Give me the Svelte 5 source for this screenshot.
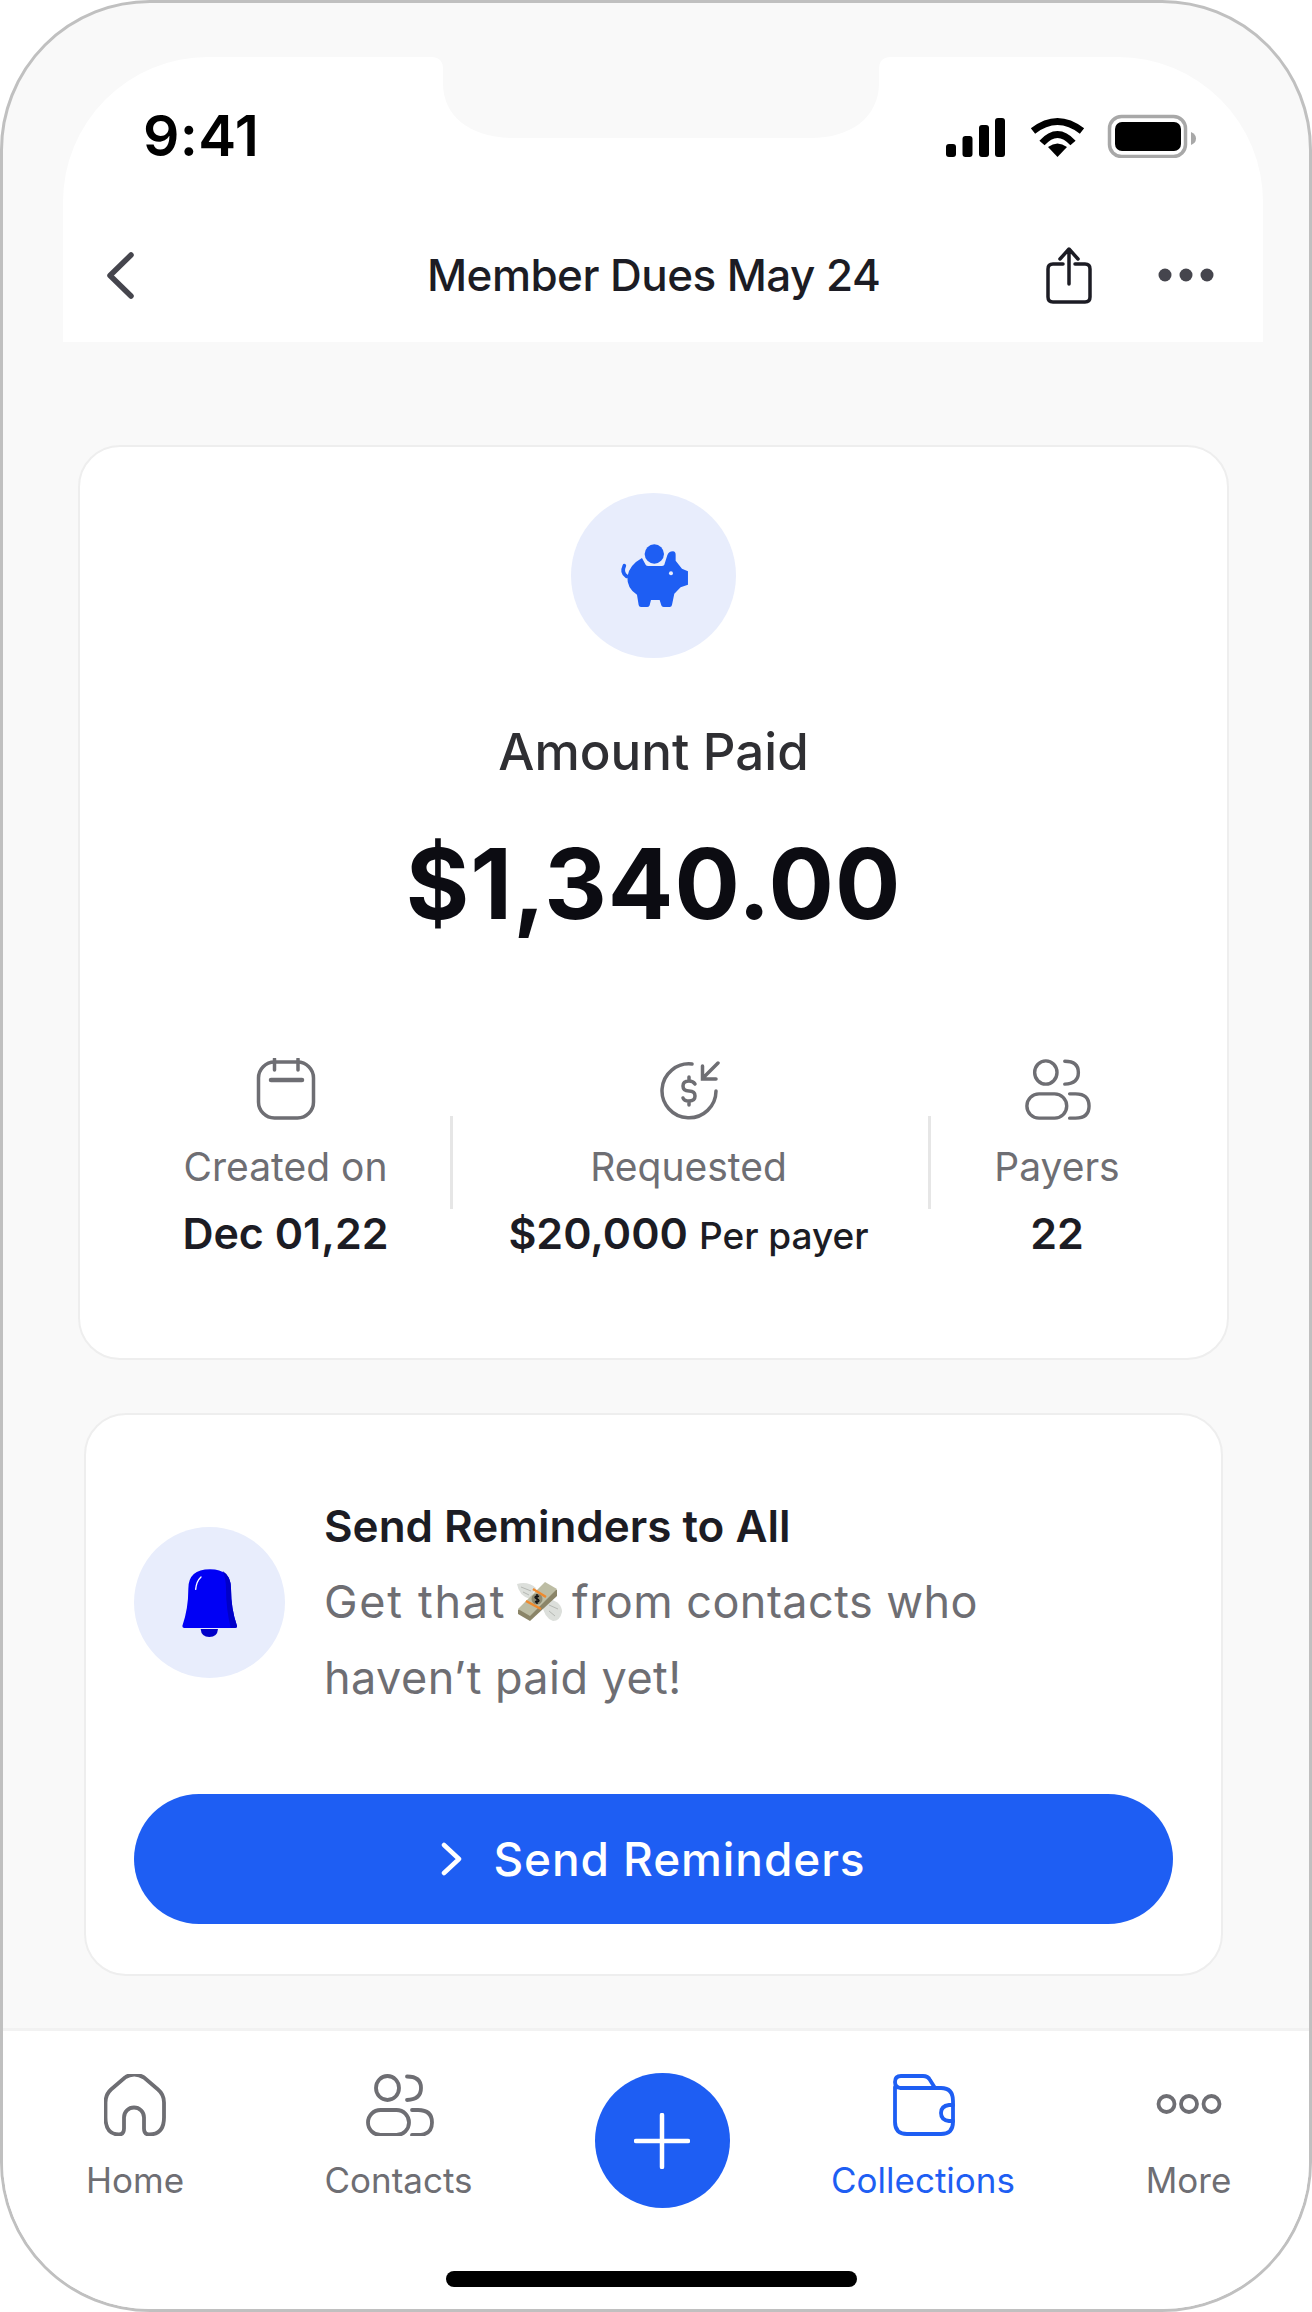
<script>
  const stats = [
    { label: 'Created on', value: 'Dec 01,22', note: '', kind: 'calendar' },
    { label: 'Requested', value: '$20,000', note: 'Per payer', kind: 'dollar' },
    { label: 'Payers', value: '22', note: '', kind: 'users' }
  ];
</script>

{#snippet users(cls)}
  <svg class={cls} viewBox="364 2074 70 62" aria-hidden="true">
    <ellipse cx="387.5" cy="2088" rx="11.5" ry="12" />
    <path d="M407 2076.5Q421 2076.5 421 2088T407 2100" />
    <rect x="368" y="2110" width="41" height="25" rx="12.5" />
    <path d="M412 2110H418Q432 2110 432 2122.5T418 2135H412" />
  </svg>
{/snippet}

<div class="phone">
  <header class="top">
    <svg class="notch" viewBox="431 57 460 82" aria-hidden="true">
      <path d="M431 57H891Q879 57 879 69V83C879 118 850 138 811 138H515C472 138 443 118 443 83V69Q443 57 431 57Z" />
    </svg>
    <div class="status">
      <span class="time">9:41</span>
      <svg class="status-icons" viewBox="946 112 251 44" aria-hidden="true">
        <rect x="946" y="142" width="10" height="13" rx="3" />
        <rect x="962.5" y="134" width="10" height="21" rx="3" />
        <rect x="979" y="123" width="10" height="32" rx="3" />
        <rect x="995" y="116" width="10" height="39" rx="3" />
        <path class="wifi" d="M1033 129Q1057.5 110 1082 129" />
        <path class="wifi" d="M1042 141Q1057.5 124 1073 141" />
        <path d="M1057.5 155L1048 145Q1057.5 138 1067 145Z" />
        <rect class="bat" x="1109.5" y="114.5" width="76" height="40" rx="12" />
        <rect x="1115" y="120" width="66" height="29" rx="7" />
        <path class="tip" d="M1191 130Q1196 132 1196 136.500T1191 143Z" />
      </svg>
    </div>
    <div class="titlebar">
      <svg class="back" viewBox="105 249 31 51" aria-hidden="true"><path d="M131 254L110 274.500L131 295" /></svg>
      <h1>Member Dues May 24</h1>
      <svg class="share" viewBox="1045 244 48 59" aria-hidden="true">
        <path d="M1063 262H1053Q1048 262 1048 267V295Q1048 300 1053 300H1085Q1090 300 1090 295V267Q1090 262 1085 262H1075" />
        <path d="M1069 282V248M1060 257L1069 247L1078 257" />
      </svg>
      <svg class="dots" viewBox="0 0 56 14" aria-hidden="true">
        <circle cx="7" cy="7" r="6.500" /><circle cx="28" cy="7" r="6.500" /><circle cx="49" cy="7" r="6.500" />
      </svg>
    </div>
  </header>

  <main>
    <section class="card summary">
      <div class="round big">
        <svg class="pig" viewBox="350 250 220 200" aria-hidden="true">
          <circle cx="462" cy="286" r="29" />
          <path d="M425 298L436 318Q438 322 444 322H484Q490 322 492 318L501 290Q505 278 518 278Q526 279 526 288V306L545 330L563 338V378L541 386L522 405L515 439Q514 445 508 445H490Q484 445 483 440L478 424H452L448 440Q447 445 441 445H422Q416 445 415 439L410 408Q380 390 381 355Q385 320 425 298Z" />
          <path class="tail" d="M379 353Q362 342 372 321" />
          <circle class="eye" cx="512" cy="344" r="6" />
        </svg>
      </div>
      <div class="eyebrow">Amount Paid</div>
      <div class="amount">$1,340.00</div>
      <div class="stats">
        {#each stats as s, i}
          {#if i > 0}<span class="rule"></span>{/if}
          <div class="stat stat-{i}">
            {#if s.kind === 'calendar'}
              <svg class="sicon" viewBox="254 1058 62 62" aria-hidden="true">
                <rect x="257.500" y="1062" width="55" height="56" rx="16" />
                <path d="M273.500 1059V1070M297 1059V1070" />
                <path d="M270 1080H301" class="thick" />
              </svg>
            {:else if s.kind === 'dollar'}
              <svg class="sicon" viewBox="657 1058 62 62" aria-hidden="true">
                <path d="M691 1064A27 27 0 1 0 715 1091" />
                <path d="M717 1063L702 1078M701.500 1066V1079H715" />
                <path d="M694 1084Q692 1081 688 1081Q682 1081 682 1086Q682 1091 688 1091Q694 1091 694 1096Q694 1101 688 1101Q683 1101 682 1098M688 1077V1081M688 1101V1105" />
              </svg>
            {:else}
              {@render users('sicon wide')}
            {/if}
            <div class="stat-label">{s.label}</div>
            <div class="stat-value">{s.value}{#if s.note}<small>{s.note}</small>{/if}</div>
          </div>
        {/each}
      </div>
    </section>

    <section class="card reminder">
      <div class="reminder-row">
        <div class="round small">
          <svg class="bell" viewBox="240 255 180 215" aria-hidden="true">
            <path class="b1" d="M247 432Q265 380 265 320Q265 262 330 262Q393 262 393 320Q393 380 411 432Q411 438 405 438H253Q247 438 247 432Z" />
            <path class="b2" d="M368 267Q393 282 393 320Q393 380 411 432Q411 436 409 437H392Q378 380 378 320Q378 290 368 267Z" />
            <path class="b2" d="M302 441H354Q352 465 328 465Q304 465 302 441Z" />
            <path class="b3" d="M287 322Q289 298 303 285" />
          </svg>
        </div>
        <div class="reminder-text">
          <h2>Send Reminders to All</h2>
          <div class="line">
            <span class="first">Get that</span>
            <svg class="money" viewBox="0 0 46 40" aria-hidden="true">
              <path class="wing" d="M1 2Q12 -1 20 6L14 17Q3 14 1 2Z" />
              <path class="wing" d="M26 22L33 17Q46 20 46 30Q44 39 37 39Q28 36 26 22Z" />
              <path class="feather" d="M5 5L15 9M7 10L13 13M33 23L42 27M33 29L39 34" />
              <path class="bill-dark" d="M2 28L29 1L41 8V14L14 39L2 32Z" />
              <path class="bill" d="M2 27L29 0L41 7L14 34Z" />
              <path class="band" d="M17 7L30 15M10 19L25 27" />
              <circle class="seal" cx="21" cy="17" r="5.500" />
              <path class="sign" d="M23 14.500Q21 13.500 19.500 14.500T21 17T22.500 19.500T19 19.500M21 12V22" />
            </svg>
            <span>from contacts who</span>
          </div>
          <div class="line">haven’t paid yet!</div>
        </div>
      </div>
      <button class="cta">
        <svg class="chev" viewBox="0 0 22 34" aria-hidden="true"><path d="M3 3L18 17L3 31" /></svg>
        Send Reminders
      </button>
    </section>
  </main>

  <nav>
    <div class="item">
      <svg class="nicon" viewBox="106 2073.500 62 62" aria-hidden="true">
        <path d="M107.500 2102Q107.500 2094 113 2089L127 2077Q136 2071 146 2077L160 2089Q166 2094 166 2102V2117Q166 2134 151 2134Q146 2134 146 2128V2117A10 10 0 0 0 126 2117V2128Q126 2134 121 2134Q107.500 2134 107.500 2117Z" />
      </svg>
      <span>Home</span>
    </div>
    <div class="item">
      {@render users('nicon wide')}
      <span>Contacts</span>
    </div>
    <div class="item">
      <button class="plus" aria-label="Add">
        <svg viewBox="0 0 56 56" aria-hidden="true"><path d="M28 2V54M2 28H54" /></svg>
      </button>
    </div>
    <div class="item active">
      <svg class="nicon" viewBox="893 2074 64 62" aria-hidden="true">
        <path d="M897 2087V2122Q897 2134 909 2134H943Q955 2134 955 2122V2101Q955 2088 943 2088H902Q897 2087 897 2082Q897 2076 903 2076H925Q930 2076 932 2080L937 2088" />
        <path d="M955 2105H951Q943 2106 943 2113Q943 2120 951 2121H955" />
      </svg>
      <span>Collections</span>
    </div>
    <div class="item last">
      <svg class="nicon" viewBox="1153 2073.500 68 62" aria-hidden="true">
        <circle cx="1164.500" cy="2103.500" r="8" /><circle cx="1187" cy="2103.500" r="8" /><circle cx="1209.500" cy="2103.500" r="8" />
      </svg>
      <span>More</span>
    </div>
    <div class="home-bar"></div>
  </nav>
</div>

<style>
  :global(body) { margin: 0; background: #fff; }
  * { box-sizing: border-box; }
  .phone {
    position: relative;
    width: 1312px;
    height: 2312px;
    display: flex;
    flex-direction: column;
    overflow: hidden;
    background: #f9f9f9;
    border: 3px solid #c0c0c0;
    border-radius: 150px;
    font-family: Inter, "Noto Sans", sans-serif;
    color: #1c1c24;
  }
  svg { display: block; fill: none; }

  .top {
    position: relative;
    flex: none;
    height: 285px;
    margin: 54px 46px 0 60px;
    background: #fff;
    border-radius: 145px 145px 0 0;
  }
  .notch { position: absolute; left: 368px; top: 0; width: 460px; height: 82px; }
  .notch path { fill: #f9f9f9; }
  .status { display: flex; justify-content: space-between; align-items: center; padding: 43px 66px 0 80px; height: 115px; }
  .time { font-size: 57px; font-weight: 600; color: #000; line-height: 60px; letter-spacing: 0.3px; }
  .status-icons { width: 251px; height: 44px; fill: #000; }
  .status-icons .wifi { fill: none; stroke: #000; stroke-width: 7; }
  .status-icons .bat { fill: none; stroke: #a8a8a8; stroke-width: 3.500; }
  .status-icons .tip { fill: #a8a8a8; }

  .titlebar { display: flex; align-items: center; height: 100px; padding: 0 0 0 42px; margin-top: 53px; position: relative; }
  .back { width: 31px; height: 51px; }
  .back path { stroke: #45454d; stroke-width: 5.500; stroke-linecap: round; stroke-linejoin: round; }
  h1 { margin: 0 0 0 291px; font-size: 44px; font-weight: 500; letter-spacing: -0.55px; line-height: 56px; white-space: nowrap; width: 452px; }
  .share { width: 48px; height: 59px; margin-left: 166px; }
  .share path { stroke: #1c1c24; stroke-width: 3.500; stroke-linecap: round; stroke-linejoin: round; }
  .dots { width: 56px; height: 14px; margin-left: 65px; fill: #45454d; }

  main { flex: 1; display: flex; flex-direction: column; align-items: flex-start; }
  .card { background: #fff; border: 2.500px solid #eeeeee; border-radius: 42px; }
  .summary { display: flex; flex-direction: column; align-items: center; width: 1151px; height: 915px; margin: 103px 0 0 75px; padding-top: 46px; }
  .round { display: flex; align-items: center; justify-content: center; border-radius: 50%; background: #e8edfc; flex: none; }
  .big { width: 165px; height: 165px; }
  .pig { width: 73.300px; height: 66.700px; fill: #1e5ef3; margin-left: 1px; }
  .pig .tail { stroke: #1e5ef3; stroke-width: 11; stroke-linecap: round; fill: none; }
  .pig .eye { fill: #e8edfc; }
  .eyebrow { margin-top: 64px; font-size: 51px; font-weight: 500; line-height: 60px; color: #2f2f33; }
  .amount { margin-top: 42px; font-size: 97px; font-weight: 700; line-height: 120px; color: #0c0c12; letter-spacing: 1px; }

  .stats { display: flex; align-items: flex-start; align-self: stretch; margin-top: 114px; padding-left: 41px; }
  .rule { width: 3px; height: 93px; margin-top: 58px; background: #e6e6e6; flex: none; }
  .stat { display: flex; flex-direction: column; align-items: center; }
  .stat-0 { width: 329px; }
  .stat-1 { width: 475px; padding-right: 4px; }
  .stat-2 { width: 252px; }
  .sicon { width: 62px; height: 62px; }
  .sicon.wide { width: 68px; }
  .sicon :global(*) { stroke: #6e6e73; stroke-width: 3.500; stroke-linecap: round; fill: none; }
  .sicon .thick { stroke-width: 4.500; }
  .stat-label { margin-top: 23px; font-size: 39px; line-height: 48px; color: #6e6e73; white-space: nowrap; }
  .stat-value { margin-top: 17px; font-size: 43px; font-weight: 600; line-height: 50px; white-space: nowrap; color: #1c1c24; }
  .stat-value small { margin-left: 11px; font-size: 37px; font-weight: 500; }

  .reminder { width: 1139px; height: 563px; margin: 53px 0 0 81px; padding: 85px 50px 0 48px; }
  .reminder-row { display: flex; align-items: flex-start; gap: 39px; height: 294px; }
  .small { width: 151px; height: 151px; margin-top: 27px; }
  .bell { width: 60px; height: 71.700px; }
  .b1 { fill: #0000f5; }
  .b2 { fill: #0000c8; }
  .b3 { stroke: #fff; stroke-width: 4; stroke-linecap: round; fill: none; }
  h2 { margin: 0 0 12px; font-size: 44px; font-weight: 600; line-height: 52px; color: #1c1c24; white-space: nowrap; }
  .line { display: flex; align-items: center; gap: 10px; font-size: 45px; line-height: 76px; color: #6e6e73; letter-spacing: 0.45px; white-space: nowrap; }
  .first { letter-spacing: 1.700px; }
  .money { width: 46px; height: 40px; flex: none; }
  .wing { fill: #dcdfdb; }
  .feather { stroke: #b5b8b3; stroke-width: 1; }
  .bill-dark { fill: #8b8568; }
  .bill { fill: #bdbda4; }
  .band { stroke: #f08a2c; stroke-width: 2.500; }
  .seal { fill: #8d8a72; }
  .sign { stroke: #111; stroke-width: 1.400; }
  .cta {
    display: flex; align-items: center; justify-content: center; gap: 30px;
    width: 1039px; height: 130px; border: 0; border-radius: 65px;
    background: #1e5ef3; color: #fff;
    font: 500 46px/56px Inter, sans-serif; letter-spacing: 0.9px;
  }
  .chev { width: 22px; height: 34px; }
  .chev path { stroke: #fff; stroke-width: 4.500; stroke-linecap: round; stroke-linejoin: round; }

  nav {
    position: relative;
    flex: none;
    height: 281px;
    display: grid;
    grid-template-columns: 264px 263px 264px 258px 1fr;
    align-items: start;
    padding-top: 43px;
    background: #fff;
    border-top: 3px solid #f2f2f2;
  }
  .item { display: flex; flex-direction: column; align-items: center; color: #6e6e73; font-size: 35px; line-height: 42px; }
  .item span { margin-top: 23px; }
  .last { padding-left: 16px; }
  .active { color: #1e5ef3; }
  .nicon { height: 62px; width: 62px; }
  .nicon.wide { width: 70px; }
  .last .nicon { width: 68px; }
  .active .nicon { width: 64px; }
  .nicon :global(*) { stroke: currentColor; stroke-width: 3.800; stroke-linejoin: round; stroke-linecap: round; fill: none; }
  .item:not(.active) .nicon :global(*) { stroke: #6e6e73; }
  .plus { display: flex; align-items: center; justify-content: center; width: 135px; height: 135px; margin-top: -1px; border: 0; padding: 0; border-radius: 50%; background: #1e5ef3; }
  .plus svg { width: 56px; height: 56px; }
  .plus path { stroke: #fff; stroke-width: 4.500; stroke-linecap: round; }
  .home-bar { position: absolute; left: 443px; bottom: 22px; width: 411px; height: 16px; border-radius: 8px; background: #000; }
</style>
